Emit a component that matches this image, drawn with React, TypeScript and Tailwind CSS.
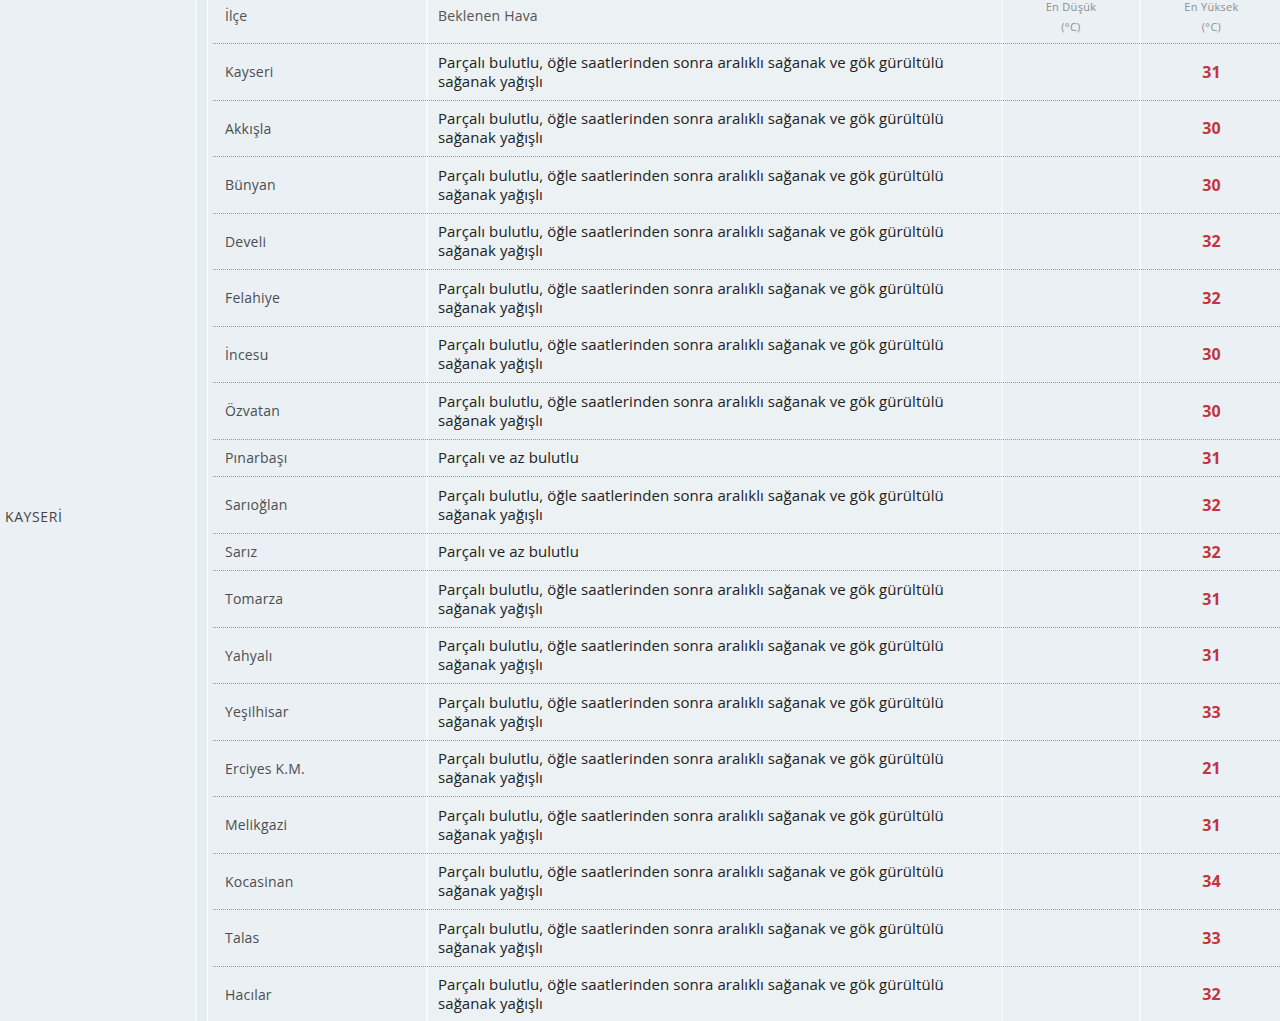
import React from "react";

const LONG = "Parçalı bulutlu, öğle saatlerinden sonra aralıklı sağanak ve gök gürültülü sağanak yağışlı";
const SHORT = "Parçalı ve az bulutlu";

const rows: { name: string; hava: string; max: string }[] = [
  { name: "Kayseri", hava: LONG, max: "31" },
  { name: "Akkışla", hava: LONG, max: "30" },
  { name: "Bünyan", hava: LONG, max: "30" },
  { name: "Develi", hava: LONG, max: "32" },
  { name: "Felahiye", hava: LONG, max: "32" },
  { name: "İncesu", hava: LONG, max: "30" },
  { name: "Özvatan", hava: LONG, max: "30" },
  { name: "Pınarbaşı", hava: SHORT, max: "31" },
  { name: "Sarıoğlan", hava: LONG, max: "32" },
  { name: "Sarız", hava: SHORT, max: "32" },
  { name: "Tomarza", hava: LONG, max: "31" },
  { name: "Yahyalı", hava: LONG, max: "31" },
  { name: "Yeşilhisar", hava: LONG, max: "33" },
  { name: "Erciyes K.M.", hava: LONG, max: "21" },
  { name: "Melikgazi", hava: LONG, max: "31" },
  { name: "Kocasinan", hava: LONG, max: "34" },
  { name: "Talas", hava: LONG, max: "33" },
  { name: "Hacılar", hava: LONG, max: "32" },
];

export default function App() {
  return (
    <div
      className="flex w-[1280px] h-[1021px] overflow-hidden bg-[#eaf0f3]"
      style={{ fontFamily: '"Open Sans", "Noto Sans", sans-serif' }}
    >
      <div className="w-[195px] shrink-0 flex items-center pl-[5px] pt-[11px] text-[14px] tracking-[0.6px] text-[#444]">
        KAYSERİ
      </div>
      <div className="w-[2px] shrink-0 bg-[#f7fafb]" />
      <div className="w-[10px] shrink-0 bg-[#e6edf0]" />
      <div className="w-[1px] shrink-0 bg-[#fbfdfe]" />
      <div className="flex flex-col flex-1 pl-[5px]">
        <div className="flex h-[44px] shrink-0 border-b border-dotted border-[#8f969c] text-[#555]">
          <div className="w-[215px] shrink-0 pl-[12px] pt-[6px] leading-[19px] text-[14px] border-r-2 border-[#f6f9fa]">
            İlçe
          </div>
          <div className="w-[575px] shrink-0 pl-[10px] pt-[6px] leading-[19px] text-[14px] tracking-[0.2px] border-r-2 border-[#f6f9fa] bg-[#ecf1f4]">
            Beklenen Hava
          </div>
          <div className="w-[138px] shrink-0 flex flex-col items-center text-[11px] leading-[20px] tracking-[0.3px] text-[#8a8f94] -mt-[3px] border-r-2 border-[#f6f9fa]">
            <span>En Düşük</span>
            <span>(°C)</span>
          </div>
          <div className="flex-1 flex flex-col items-center pl-[2px] text-[11px] leading-[20px] tracking-[0.3px] text-[#8a8f94] -mt-[3px]">
            <span>En Yüksek</span>
            <span>(°C)</span>
          </div>
        </div>
        {rows.map((r) => (
          <div
            key={r.name}
            className="flex shrink-0 border-b border-dotted border-[#8f969c]"
          >
            <div className="w-[215px] shrink-0 flex items-center pl-[12px] py-[8.75px] text-[14px] leading-[19px] tracking-[0.2px] text-[#4a4f55] border-r-2 border-[#f6f9fa]">
              {r.name}
            </div>
            <div className="w-[575px] shrink-0 flex items-center pl-[10px] pr-[30px] py-[8.75px] text-[15px] leading-[19px] tracking-[0.08px] text-[#222] border-r-2 border-[#f6f9fa] bg-[#ecf1f4]">
              {r.hava}
            </div>
            <div className="w-[138px] shrink-0 border-r-2 border-[#f6f9fa]" />
            <div className="flex-1 flex items-center justify-center pl-[2px] text-[16px] font-bold text-[#c3343e]">
              {r.max}
            </div>
          </div>
        ))}
      </div>
    </div>
  );
}
